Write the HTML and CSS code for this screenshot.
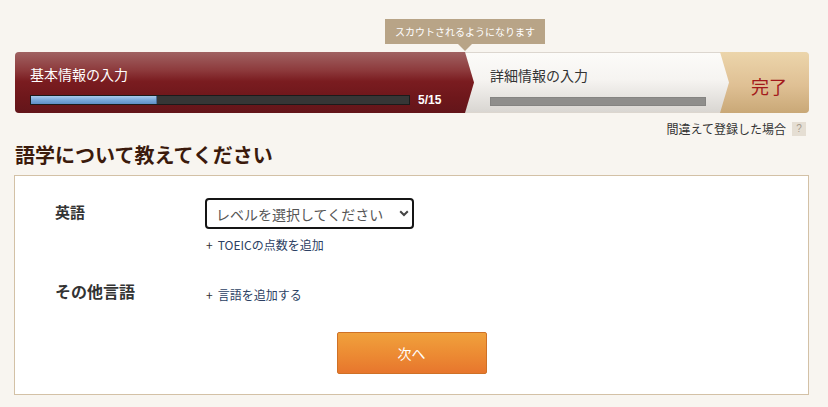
FILE: index.html
```html
<!DOCTYPE html>
<html lang="ja">
<head>
<meta charset="utf-8">
<link rel="stylesheet" href="styles.css">
</head>
<body>
<div class="wrap">
  <div class="steps">
    <div class="tip">スカウトされるようになります</div>
    <div class="step step1">
      <div class="step-title">基本情報の入力</div>
      <div class="bar-row">
        <div class="bar"><div class="fill" style="width:33.3%"></div></div>
        <span class="count">5/15</span>
      </div>
    </div>
    <div class="step step2">
      <div class="step-title">詳細情報の入力</div>
      <div class="bar-row">
        <div class="bar grey"></div>
      </div>
    </div>
    <div class="step step3">完了</div>
  </div>
  <div class="help">
    <span>間違えて登録した場合</span><span class="q">?</span>
  </div>
  <h1 class="heading">語学について教えてください</h1>
  <div class="card">
    <div class="row">
      <div class="label">英語</div>
      <div class="field">
        <div class="select-wrap">
          <select class="select"><option>レベルを選択してください</option></select>
          <svg class="chev" width="10" height="7" viewBox="0 0 10 7"><path d="M1.2 1.2 L5 5 L8.8 1.2" fill="none" stroke="#444" stroke-width="2"/></svg>
        </div>
        <a class="add add-toeic"><span class="plus">+</span>TOEICの点数を追加</a>
      </div>
    </div>
    <div class="row row2">
      <div class="label">その他言語</div>
      <div class="field">
        <a class="add add-lang"><span class="plus">+</span>言語を追加する</a>
      </div>
    </div>
    <div class="actions">
      <button class="next">次へ</button>
    </div>
  </div>
</div>
</body>
</html>
```
FILE: styles.css
```css
* { box-sizing: border-box; }
html, body { margin: 0; padding: 0; }
body {
  background: #f8f5f0;
  font-family: "Noto Sans CJK JP", "Noto Sans", sans-serif;
  color: #333;
  width: 828px;
  height: 407px;
  overflow: hidden;
}
.wrap {
  padding: 52px 19px 0 14px;
}
.steps {
  position: relative;
  display: flex;
  height: 61px;
  margin-left: 1px;
  border: 1px solid #dcd6cf;
  border-radius: 4px;
  background: linear-gradient(#fcfbf9 0%, #f6f4f1 45%, #d9d6d2 100%);
}
.tip {
  position: absolute;
  left: 369px;
  top: -34px;
  width: 160px;
  height: 25px;
  background: #b8a487;
  color: #fff;
  font-size: 10px;
  line-height: 25px;
  text-align: center;
}
.tip::after {
  content: "";
  position: absolute;
  left: 73px;
  bottom: -7px;
  border-left: 7px solid transparent;
  border-right: 7px solid transparent;
  border-top: 7px solid #b8a487;
}
.step { height: 100%; }
.step1 {
  flex: 0 0 459px;
  margin: -1px 0 -1px -1px;
  height: calc(100% + 2px);
  border-radius: 4px 0 0 4px;
  padding: 12px 0 0 15px;
  background: linear-gradient(#a06262 0%, #8d3a3c 30%, #7a1c20 48%, #6e171b 75%, #63151a 100%);
  clip-path: polygon(0 0, 450px 0, 100% 50%, 450px 100%, 0 100%);
  color: #fff;
}
.step-title {
  font-size: 14px;
  line-height: 20px;
}
.bar-row {
  display: flex;
  align-items: center;
  margin-top: 10px;
  height: 12px;
}
.bar {
  width: 380px;
  height: 10px;
  background: #363636;
  border: 1px solid #1b1b1b;
}
.fill {
  height: 100%;
  background: linear-gradient(#a9cbec 0%, #7aa9da 50%, #5f8fc6 100%);
  border-right: 1px solid #4a6f9a;
}
.count {
  margin-left: 8px;
  font-family: "Liberation Sans", Arial, sans-serif;
  font-weight: bold;
  font-size: 12px;
  color: #fff;
}
.step2 {
  flex: 0 0 246px;
  padding: 12px 0 0 16px;
  color: #333;
}
.step2 .bar-row { margin-top: 10px; }
.bar.grey {
  width: 216px;
  height: 9px;
  background: #8f8e8c;
  border: 1px solid #858482;
}
.step3 {
  flex: 1;
  margin: -1px -1px -1px 0;
  height: calc(100% + 2px);
  border-radius: 0 4px 4px 0;
  background: linear-gradient(#ecd5ab 0%, #dfc094 55%, #c9a877 100%);
  clip-path: polygon(0 0, 100% 0, 100% 100%, 0 100%, 9px 50%);
  display: flex;
  align-items: center;
  justify-content: center;
  padding-left: 9px;
  padding-top: 6px;
  font-size: 18px;
  color: #a3191b;
}
.help {
  display: flex;
  justify-content: flex-end;
  align-items: center;
  gap: 6px;
  margin-top: 8px;
  margin-right: 3px;
  font-size: 12px;
  line-height: 16px;
  color: #333;
}
.q {
  width: 14px;
  height: 14px;
  background: #e5ded3;
  color: #a59a8c;
  font-family: "Liberation Sans", Arial, sans-serif;
  font-size: 10px;
  line-height: 14px;
  text-align: center;
}
.heading {
  margin: 5px 0 0 1px;
  font-size: 20px;
  line-height: 26px;
  font-weight: bold;
  color: #3b1a0c;
}
.card {
  margin-top: 7px;
  height: 220px;
  background: #fff;
  border: 1px solid #d3c1a6;
  padding: 22px 0 0 40px;
}
.row {
  display: flex;
}
.label {
  width: 150px;
  font-size: 15px;
  font-weight: bold;
  color: #333;
  line-height: 22px;
  padding-top: 3px;
}
.field { display: flex; flex-direction: column; }
.select-wrap {
  position: relative;
  width: 209px;
  height: 31px;
}
.select {
  appearance: none;
  -webkit-appearance: none;
  width: 100%;
  height: 100%;
  border: 2px solid #151515;
  border-radius: 4px;
  background: #fff;
  padding: 0 0 0 9px;
  font-family: "Noto Sans CJK JP", sans-serif;
  font-size: 14px;
  color: #555;
  outline: none;
}
.chev {
  position: absolute;
  right: 5px;
  top: 12px;
}
.add {
  display: block;
  font-size: 12px;
  line-height: 16px;
  color: #2c3f63;
  cursor: pointer;
}
.plus {
  color: #333;
  margin-right: 5px;
  margin-left: 1px;
}
.add-toeic { margin-top: 8px; }
.row2 { margin-top: 27px; }
.row2 .label { padding-top: 0; font-size: 16px; }
.add-lang { margin-top: 7px; }
.actions {
  display: flex;
  justify-content: center;
  margin-left: -40px;
  margin-top: 29px;
}
.next {
  width: 150px;
  height: 42px;
  border: 1px solid #cf7126;
  border-radius: 2px;
  background: linear-gradient(#f0a13c 0%, #ec8a33 55%, #e7762d 100%);
  color: #fff;
  font-family: "Noto Sans CJK JP", sans-serif;
  font-size: 14px;
}
```
